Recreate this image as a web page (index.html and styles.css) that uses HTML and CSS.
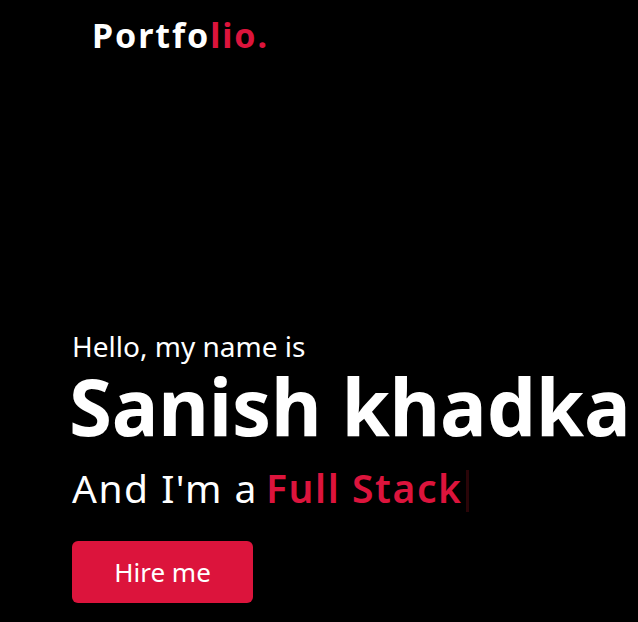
FILE: index.html
```html
<!DOCTYPE html>
<html lang="en">
<head>
<meta charset="utf-8">
<title>Portfolio</title>
<link rel="stylesheet" href="styles.css">
</head>
<body>
<nav class="navbar">
  <div class="logo"><a href="#">Portfo<span>lio.</span></a></div>
</nav>
<section class="home">
  <div class="home-content">
    <div class="text-1">Hello, my name is</div>
    <div class="text-2">Sanish khadka</div>
    <div class="text-3"><span class="lead">And I'm a</span><span class="typing">Full Stack</span><span class="caret"></span></div>
    <a class="hire" href="#">Hire me</a>
  </div>
</section>
</body>
</html>
```
FILE: styles.css
```css
* { margin: 0; padding: 0; box-sizing: border-box; }
body {
  background: #000;
  color: #fff;
  font-family: "Noto Sans", "Open Sans", sans-serif;
  width: 638px;
  height: 622px;
  overflow: hidden;
}
.navbar {
  padding: 15px 0 0 92px;
  height: 55px;
}
.logo a {
  color: #fff;
  font-size: 34px;
  font-weight: 700;
  text-decoration: none;
  line-height: 40px;
  letter-spacing: 1.9px;
}
.logo span { color: #dc143c; }
.home {
  padding: 273px 0 0 72px;
}
.home-content { display: flex; flex-direction: column; align-items: flex-start; }
.text-1 {
  font-size: 28px;
  line-height: 36px;
}
.text-2 {
  font-size: 78px;
  font-weight: 700;
  line-height: 84px;
  margin-left: -3px;
  letter-spacing: -0.2px;
}
.text-3 {
  font-size: 39px;
  line-height: 48px;
  margin-top: 16px;
  display: flex;
  align-items: flex-start;
}
.lead { letter-spacing: 1.5px; }
.typing { color: #dc143c; font-weight: 600; margin-left: 8px; letter-spacing: 1.6px; }
.caret {
  width: 3px;
  height: 42px;
  background: #2a0508;
  margin: 6px 0 0 3px;
}
.hire {
  margin-top: 29px;
  display: inline-block;
  background: #dc143c;
  color: #fff;
  font-size: 26px;
  line-height: 38px;
  padding: 12px 0;
  border-radius: 6px;
  text-decoration: none;
  width: 181px;
  text-align: center;
}
```
